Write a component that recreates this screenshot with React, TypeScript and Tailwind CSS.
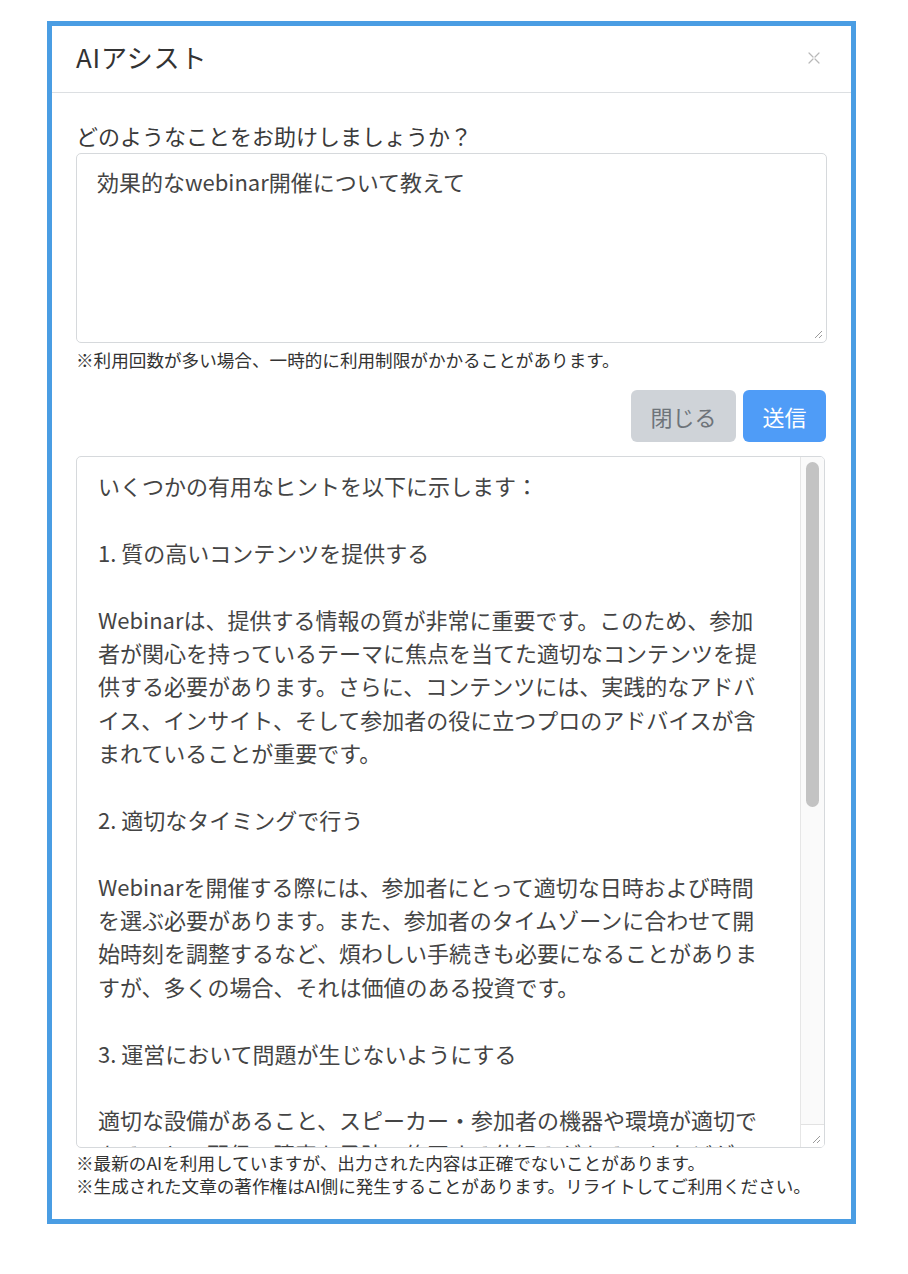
import React from "react";

const outputLines: string[] = [
  "いくつかの有用なヒントを以下に示します：",
  "",
  "1. 質の高いコンテンツを提供する",
  "",
  "Webinarは、提供する情報の質が非常に重要です。このため、参加",
  "者が関心を持っているテーマに焦点を当てた適切なコンテンツを提",
  "供する必要があります。さらに、コンテンツには、実践的なアドバ",
  "イス、インサイト、そして参加者の役に立つプロのアドバイスが含",
  "まれていることが重要です。",
  "",
  "2. 適切なタイミングで行う",
  "",
  "Webinarを開催する際には、参加者にとって適切な日時および時間",
  "を選ぶ必要があります。また、参加者のタイムゾーンに合わせて開",
  "始時刻を調整するなど、煩わしい手続きも必要になることがありま",
  "すが、多くの場合、それは価値のある投資です。",
  "",
  "3. 運営において問題が生じないようにする",
  "",
  "適切な設備があること、スピーカー・参加者の機器や環境が適切で",
  "あること、配信の障害を予防・修正する仕組みがあることなどが",
];

function Grip() {
  return (
    <svg width="10" height="10" viewBox="0 0 10 10" className="block">
      <line x1="9" y1="2" x2="2" y2="9" stroke="#9a9a9a" strokeWidth="1" />
      <line x1="9" y1="6" x2="6" y2="9" stroke="#9a9a9a" strokeWidth="1" />
    </svg>
  );
}

export default function App() {
  return (
    <div
      className="w-[908px] h-[1274px] bg-white pt-[21px] pl-[47px]"
      style={{ fontFamily: '"Noto Sans CJK JP", "Noto Sans", sans-serif' }}
    >
      <div className="w-[809px] h-[1203px] border-[5px] border-[#4a9de3] bg-white flex flex-col">
        {/* header */}
        <div className="h-[67px] border-b border-[#dcdfe2] flex items-center justify-between pl-[24px] pr-[30px] pb-[5px] shrink-0">
          <div className="text-[26px] leading-none text-[#333] tracking-[0.8px]">AIアシスト</div>
          <svg width="14" height="14" viewBox="0 0 14 14" className="mt-[3px]">
            <path d="M2 2 L6 6 M8 8 L12 12 M12 2 L8 6 M6 8 L2 12" stroke="#b8b8b8" strokeWidth="1.2" strokeLinecap="round" fill="none" />
          </svg>
        </div>

        {/* body */}
        <div className="flex flex-col px-[24px] pt-[26px]">
          <div className="text-[22px] leading-[33px] text-[#3a3a3a]">どのようなことをお助けしましょうか？</div>
          <div className="relative mt-[1px] h-[190px] border border-[#d6d9dc] rounded-[5px] pl-[20px] pt-[11px]">
            <div className="text-[22px] leading-[33px] text-[#444]">効果的なwebinar開催について教えて</div>
            <div className="absolute right-[3px] bottom-[3px]">
              <Grip />
            </div>
          </div>
          <div className="mt-[4px] text-[17.6px] leading-[25px] text-[#333]">※利用回数が多い場合、一時的に利用制限がかかることがあります。</div>

          <div className="mt-[18px] flex justify-end gap-[7px] pr-[1px]">
            <button className="h-[52px] w-[105px] rounded-[6px] bg-[#cfd3d8] text-[#6e747a] text-[22px] leading-none">閉じる</button>
            <button className="h-[52px] w-[83px] rounded-[6px] bg-[#4f9cf7] text-white text-[22px] leading-none">送信</button>
          </div>

          <div className="mt-[14px] h-[692px] border border-[#d6d9dc] rounded-[5px] flex overflow-hidden w-[749px]">
            <div className="flex-1 overflow-hidden pl-[21px] pt-[12px] text-[22px] leading-[33.4px] text-[#444]">
              {outputLines.map((l, i) => (
                <div key={i} className="whitespace-pre h-[33.4px]">
                  {l === "" ? " " : l}
                </div>
              ))}
            </div>
            <div className="w-[24px] shrink-0 border-l border-[#e6e6e6] bg-[#fafafa] flex flex-col">
              <div className="flex-1 pt-[5px] flex justify-center">
                <div className="w-[13px] h-[345px] rounded-full bg-[#c3c3c3]" />
              </div>
              <div className="h-[23px] border-t border-[#e2e2e2] bg-white flex items-end justify-end pr-[3px] pb-[3px]">
                <Grip />
              </div>
            </div>
          </div>

          <div className="mt-[3px] text-[17.6px] leading-[23px] text-[#333]">
            <div>※最新のAIを利用していますが、出力された内容は正確でないことがあります。</div>
            <div>※生成された文章の著作権はAI側に発生することがあります。リライトしてご利用ください。</div>
          </div>
        </div>
      </div>
    </div>
  );
}
